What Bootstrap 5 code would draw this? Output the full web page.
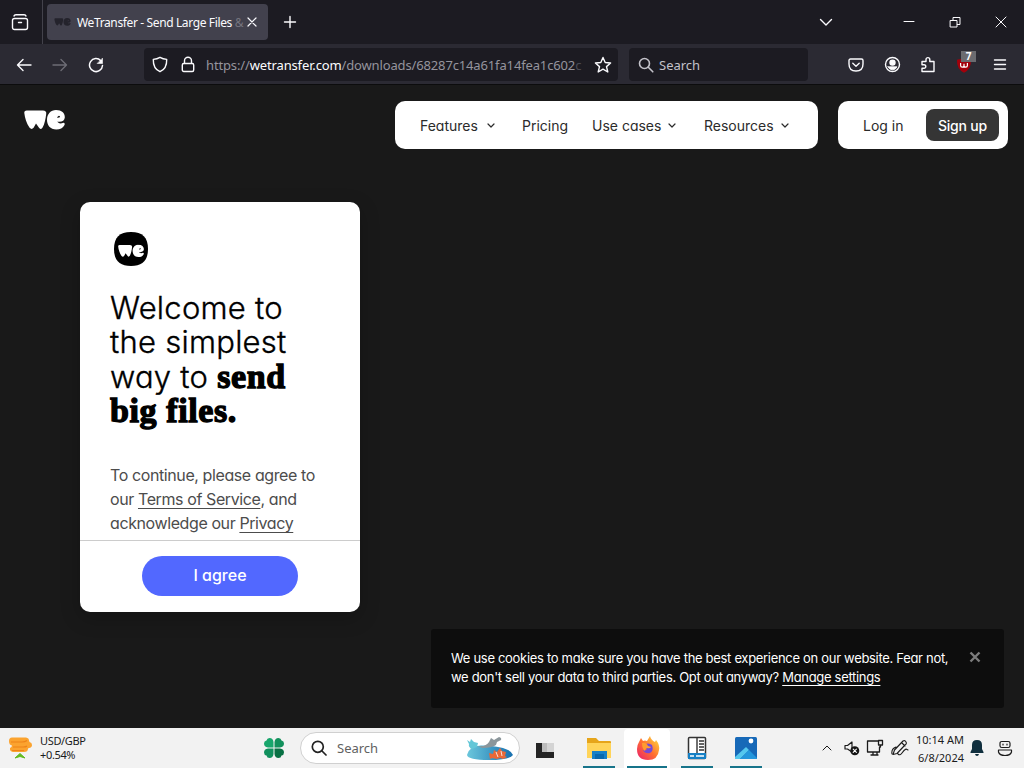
<!DOCTYPE html>
<html lang="en">
<head>
    <meta charset="UTF-8">
    <meta name="viewport" content="width=device-width, initial-scale=1.0">
    <title>WeTransfer - Send Large Files</title>
    <link rel="stylesheet" href="https://cdn.jsdelivr.net/npm/bootstrap@5.3.0/dist/css/bootstrap.min.css">
    <style>
        body { width: 1024px; height: 768px; overflow: hidden; background: #191919; font-family: "Noto Sans", sans-serif; font-size: 12px; line-height: 1.2; }
        svg { display: block; flex: none; }
        .ln { fill: none; stroke: currentColor; stroke-width: 1.4; stroke-linecap: round; stroke-linejoin: round; }
        .line { display: block; white-space: nowrap; }

        /* browser chrome */
        .tabbar { height: 44px; background: #1c1b22; color: #fbfbfe; }
        .viewbtn { width: 43px; height: 44px; border-right: 1px solid #43424b; padding-right: 3px; }
        .tab { width: 221px; height: 36px; margin: 0 0 0 4px; border-radius: 4px; background: #42414d; padding: 0 10px 0 7px; }
        .tab-title { white-space: nowrap; font-size: 12px; letter-spacing: -.37px; margin-left: 6px; padding-top: 2px; }
        .winbtn { width: 46px; }
        .toolbar { height: 41px; background: #2b2a33; color: #fbfbfe; border-bottom: 1px solid #0c0c0d; padding: 1px 6px 0; }
        .tool { width: 36px; }
        .url { width: 474px; height: 33px; margin-left: 30px; background: #1c1b22; border-radius: 4px; padding: 0 6px 0 8px; }
        .url-text { margin-left: 11px; padding-top: 2px; white-space: nowrap; font-size: 13px; letter-spacing: -.14px; color: #95949d; }
        .url-text b { color: #fbfbfe; font-weight: 400; }
        .find { width: 179px; height: 33px; margin-left: 11px; background: #1c1b22; border-radius: 4px; padding-left: 9px; font-size: 13px; color: #c3c2c9; }
        .count { right: 6px; top: -6px; width: 15px; height: 11px; background: #6b6b70; font-size: 10px; line-height: 11px; }

        /* site */
        .site { height: 643px; font-family: Inter, sans-serif; font-feature-settings: "cv11"; }
        .top-row { padding: 16px 16px 0 24px; }
        .pill { height: 48px; background: #fff; border-radius: 10px; color: #2b2b2b; font-size: 14px; }
        .pill > span { padding-top: 2px; }
        .menu { width: 423px; padding-left: 25px; margin-left: auto; }
        .signup { width: 73px; height: 32px; border-radius: 8px; background: #353535; color: #fff; font-weight: 500; letter-spacing: -.2px; }
        .welcome { width: 280px; height: 410px; margin: 53px 0 0 80px; background: #fff; border-radius: 10px; overflow: hidden; box-shadow: 0 6px 20px rgba(0,0,0,.22); }
        .welcome-body { height: 339px; padding: 29px 30px 0; border-bottom: 1px solid #ccc; overflow: hidden; }
        .welcome h1 { margin: 24px 0 0; font-size: 31px; line-height: 34.4px; font-weight: 300; letter-spacing: .25px; -webkit-text-stroke: .35px #000; color: #000; }
        .welcome h1 b { font-family: "Liberation Serif", serif; font-weight: 700; font-size: 34px; line-height: 34px; letter-spacing: .6px; -webkit-text-stroke: 1.3px #000; }
        .terms { margin-top: 34px; font-size: 16px; line-height: 24px; letter-spacing: -.4px; color: #4c4c4c; }
        .terms u, .cookie u { text-underline-offset: 3px; text-decoration-thickness: 1px; text-decoration-skip-ink: none; }
        .agree { width: 156px; height: 40px; border-radius: 20px; background: #5268ff; color: #fff; font-size: 16px; font-weight: 500; }
        .cookie { width: 573px; height: 79px; margin: 17px 20px 0 auto; background: #0d0d0d; color: #fff; font-size: 13px; line-height: 19px; letter-spacing: -.31px; padding: 20px 23px 0 20px; border-radius: 3px; }

        /* taskbar */
        .taskbar { height: 40px; background: #f2f2f2; color: #1b1b1b; font-size: 11px; }
        .rate { width: 70px; margin-left: 8px; line-height: 14px; letter-spacing: -.35px; }
        .task-search { width: 220px; height: 32px; border: 1px solid #d0d0d0; border-radius: 16px; background: #fff; font-size: 13px; color: #616161; padding: 0 5px 0 10px; margin-left: 15px; }
        .task { width: 49px; height: 40px; }
        .task-open { position: relative; }
        .task-open::after { content: ""; position: absolute; left: 9px; right: 8px; bottom: 0; height: 2px; background: #17748a; }
        .task-active::before { content: ""; position: absolute; inset: 1px 2px 0 1px; background: #fff; z-index: -1; border-radius: 4px 4px 0 0; }
        .task-active { z-index: 0; }
        .task-active::after { left: 4px; right: 5px; }
        .clock { width: 52px; text-align: right; line-height: 17.5px; white-space: nowrap; }
    </style>
</head>
<body>
    <!-- shared logo mark -->
    <svg width="0" height="0" class="position-absolute">
        <symbol id="mark-we" viewBox="0 0 41 20">
            <path d="M.3 3Q0 .4 3 .5H18.5Q22.8.3 22.2 4C21.6 9 20.6 14 18.6 17.6Q17.2 20 15.2 18L12 13.4 9.6 17.8Q7.6 20 5.6 17.8C2.4 13.4.9 8 .3 3Z"/>
            <path d="M32 0C38 0 41 3.2 40.8 7.4 40.6 10.6 37.6 12.4 33.4 11.6 34 13.6 36.7 13.8 39.4 12.8Q41.2 12.8 40.5 15C39 18.3 36 19.4 32.3 19.4 26.2 19.4 23 15.4 23 9.8 23 4 26.7 0 32 0ZM33 7.8Q36.4 8 36 6.2 34.5 4.6 33 7.8Z" fill-rule="evenodd"/>
        </symbol>
    </svg>

    <div class="tabbar d-flex align-items-center">
        <div class="viewbtn d-flex align-items-center justify-content-center">
            <svg class="ln" width="18" height="18" viewBox="0 0 18 18"><rect x="1.500" y="5.500" width="15" height="11" rx="2"/><path d="M3 3Q3.300 1.700 5 1.700h8Q14.700 1.700 15 3M7.500 9.500h3"/></svg>
        </div>
        <div class="tab d-flex align-items-center">
            <svg width="17" height="8" fill="#24232c"><use href="#mark-we"/></svg>
            <span class="tab-title">WeTransfer - Send Large Files <span style="color:#75747e">&amp;</span></span>
            <svg class="ln ms-auto" width="12" height="12" viewBox="0 0 12 12"><path d="m2 2 8 8M10 2l-8 8" stroke-width="1.200"/></svg>
        </div>
        <svg class="ln" width="14" height="14" viewBox="0 0 14 14" style="margin-left:15px"><path d="M7 1.500v11M1.500 7h11"/></svg>
        <svg class="ln ms-auto" width="14" height="14" viewBox="0 0 14 14" style="margin-right:53px"><path d="m1.500 4.500 5.500 5.500 5.500-5.500"/></svg>
        <div class="d-flex">
            <div class="winbtn d-flex justify-content-center"><svg class="ln" width="12" height="12" viewBox="0 0 12 12"><path d="M1 5.500h10" stroke-width="1"/></svg></div>
            <div class="winbtn d-flex justify-content-center"><svg class="ln" width="12" height="12" viewBox="0 0 12 12"><path d="M1.500 4.500h6.500V11H1.500zM4 4.200V1.500h7V8.500H8.300" stroke-width="1"/></svg></div>
            <div class="winbtn d-flex justify-content-center"><svg class="ln" width="12" height="12" viewBox="0 0 12 12"><path d="m1 1 10 10M11 1 1 11" stroke-width="1"/></svg></div>
        </div>
    </div>

    <div class="toolbar d-flex align-items-center">
        <div class="tool d-flex justify-content-center"><svg class="ln" width="16" height="16" viewBox="0 0 16 16"><path d="M15 8H1.500M7 2.500 1.500 8 7 13.500"/></svg></div>
        <div class="tool d-flex justify-content-center"><svg class="ln" width="16" height="16" viewBox="0 0 16 16" color="#6d6c75"><path d="M1 8h13.500M9 2.500l5.500 5.500L9 13.500"/></svg></div>
        <div class="tool d-flex justify-content-center"><svg class="ln" width="16" height="16" viewBox="0 0 16 16"><path d="M14.500 8.500A6.500 6.500 0 1 1 12.800 3.700" stroke-width="1.500"/><path d="M14.500 1.500v5h-5z" fill="currentColor" stroke-width=".6"/></svg></div>
        <div class="url d-flex align-items-center">
            <svg class="ln" width="16" height="17" viewBox="0 0 16 17"><path d="M8 1.300Q11 3 14.700 3.400 15 12.500 8 15.700 1 12.500 1.300 3.400 5 3 8 1.300Z"/></svg>
            <svg class="ln" width="14" height="17" viewBox="0 0 14 17" style="margin-left:13px"><rect x="1.300" y="7.500" width="11.400" height="8" rx="1.500"/><path d="M3.500 7.300V4.700a3.500 3.500 0 0 1 7 0v2.600"/></svg>
            <span class="url-text">https://<b>wetransfer.com</b>/downloads/68287c14a61fa14fea1c602<span style="color:#4c4b54">c</span></span>
            <svg class="ln ms-auto" width="18" height="18" viewBox="0 0 18 18"><path d="m9 1.500 2.200 5 5.400.5-4.100 3.600 1.300 5.400L9 13.200 4.200 16l1.300-5.400L1.400 7l5.400-.5z"/></svg>
        </div>
        <div class="find d-flex align-items-center">
            <svg class="ln" width="16" height="16" viewBox="0 0 16 16"><circle cx="6.500" cy="6.500" r="5" stroke-width="1.600"/><path d="m10.300 10.300 4.500 4.500" stroke-width="1.600"/></svg>
            <span style="margin-left:5px;padding-top:2px">Search</span>
        </div>
        <div class="d-flex ms-auto align-items-center">
            <div class="tool d-flex justify-content-center"><svg class="ln" width="16" height="14" viewBox="0 0 16 14"><path d="M2.500 1h11Q15 1 15 2.500V6Q15 13 8 13 1 13 1 6V2.500Q1 1 2.500 1ZM4.800 5.300 8 8.300l3.200-3"/></svg></div>
            <div class="tool d-flex justify-content-center"><svg class="ln" width="17" height="17" viewBox="0 0 17 17"><circle cx="8.500" cy="8.500" r="7"/><circle cx="8.500" cy="6.600" r="2.500" fill="currentColor"/><path d="M4 10.800h9Q11.800 13.800 8.500 13.800T4 10.800Z" fill="currentColor" stroke-width=".8"/></svg></div>
            <div class="tool d-flex justify-content-center"><svg class="ln" width="16" height="17" viewBox="0 0 16 17"><path d="M2 5.500h4V3.500a1.900 1.900 0 0 1 3.800 0v2H14v10H2v-3.200h2a1.800 1.800 0 0 0 0-3.600H2Z"/></svg></div>
            <div class="tool d-flex justify-content-center position-relative">
                <svg width="16" height="16" viewBox="0 0 16 16"><path d="M8 .5Q11 2.500 15 2.700 15.500 12 8 15.700.5 12 1 2.700 5 2.500 8 .5Z" fill="#a3000b"/><path d="M4.600 6v2.500q0 1.700 1.700 1.700T8 8.500V6.800M8 8.500q0 1.700 1.700 1.700t1.700-1.700V6" fill="none" stroke="#fff" stroke-width="1.200"/></svg>
                <span class="count position-absolute text-center fw-bold">7</span>
            </div>
            <div class="tool d-flex justify-content-center"><svg class="ln" width="14" height="14" viewBox="0 0 14 14"><path d="M1.500 2h11M1.500 6.500h11M1.500 11h11"/></svg></div>
        </div>
    </div>

    <main class="site">
        <header class="top-row d-flex">
            <svg width="41" height="20" fill="#fff" style="margin-top:9px"><use href="#mark-we"/></svg>
            <nav class="pill menu d-flex align-items-center">
                <span style="width:67px">Features</span>
                <svg class="ln" width="8" height="6" viewBox="0 0 8 6"><path d="m1 2 3 3 3-3" stroke-width="1.200"/></svg>
                <span style="width:70px;margin-left:27px">Pricing</span>
                <span style="width:76px">Use cases</span>
                <svg class="ln" width="8" height="6" viewBox="0 0 8 6"><path d="m1 2 3 3 3-3" stroke-width="1.200"/></svg>
                <span style="width:77px;margin-left:28px">Resources</span>
                <svg class="ln" width="8" height="6" viewBox="0 0 8 6"><path d="m1 2 3 3 3-3" stroke-width="1.200"/></svg>
            </nav>
            <div class="pill d-flex align-items-center justify-content-between" style="width:170px;margin-left:20px;padding:0 9px 0 25px">
                <span>Log in</span>
                <span class="signup d-flex align-items-center justify-content-center">Sign up</span>
            </div>
        </header>

        <section class="welcome">
            <div class="welcome-body">
                <svg width="36" height="36" viewBox="0 0 36 36" style="margin-left:3px"><path d="M18 1C29.500 1 35 6.500 35 18S29.500 35 18 35 1 29.500 1 18 6.500 1 18 1Z"/><use href="#mark-we" x="5" y="13.500" width="26" height="13" fill="#fff"/></svg>
                <h1>
                    <span class="line">Welcome to</span>
                    <span class="line">the simplest</span>
                    <span class="line">way to <b>send</b></span>
                    <span class="line"><b>big files.</b></span>
                </h1>
                <p class="terms mb-0">
                    <span class="line">To continue, please agree to</span>
                    <span class="line">our <u>Terms of Service</u>, and</span>
                    <span class="line">acknowledge our <u>Privacy</u></span>
                </p>
            </div>
            <div class="d-flex justify-content-center" style="padding-top:15px">
                <div class="agree d-flex align-items-center justify-content-center">I agree</div>
            </div>
        </section>

        <div class="cookie d-flex justify-content-between">
            <div>
                <span class="line">We use cookies to make sure you have the best experience on our website. Fear not,</span>
                <span class="line">we don't sell your data to third parties. Opt out anyway? <u>Manage settings</u></span>
            </div>
            <svg width="12" height="12" viewBox="0 0 12 12" style="margin-top:2px"><path d="m1.500 1.500 9 9M10.500 1.500l-9 9" stroke="#7c7c7c" stroke-width="2.400"/></svg>
        </div>
    </main>

    <footer class="taskbar d-flex align-items-center">
        <svg width="24" height="24" viewBox="0 0 24 24" style="margin-left:8px"><path d="M4 1.500h14q3 .5 3 3l.5 1.500q2.500.5 2.500 3t-3 3l-1 .5q0 3.500-4 3.500H5q-3.500-.5-3-4 2-1 2-2.500Q1 9 1 5q0-3.500 3-3.500Z" fill="#fba32f"/><path d="M3 6h11q3 0 5-1.500M5 11h10q3 0 4-1M4 14.500h12" fill="none" stroke="#ee8419" stroke-width="1.200"/><path d="m7 22 5-4.500 5 4.500-5-1.500Z" fill="#62bb20" stroke="#62bb20"/></svg>
        <div class="rate">
            <span class="line">USD/GBP</span>
            <span class="line">+0.54%</span>
        </div>
        <svg width="22" height="22" viewBox="0 0 22 22" style="margin-left:153px"><path d="M10.500 10.500H5Q1 10 1 6.500 1 4 3.500 3.500 4 1 6.500 1 10 1 10.500 5Z" fill="#18a66c"/><path d="M11.500 10.500H17q4-.5 4-4Q21 4 18.500 3.500 18 1 15.500 1 12 1 11.500 5Z" fill="#12905c"/><path d="M10.500 11.500H5Q1 12 1 15.500 1 18 3.500 18.500 4 21 6.500 21q3.500 0 4-4Z" fill="#10905d"/><path d="M11.500 11.500H17q4 .5 4 4 0 2.500-2.500 3Q18 21 15.500 21q-3.500 0-4-4Z" fill="#087044"/></svg>
        <div class="task-search d-flex align-items-center">
            <svg class="ln" width="16" height="16" viewBox="0 0 16 16" color="#222"><circle cx="6.800" cy="6.800" r="5.500" stroke-width="1.700"/><path d="m11 11 4 4" stroke-width="1.700"/></svg>
            <span style="margin-left:10px;padding-top:1px">Search</span>
            <svg class="ms-auto" width="48" height="26" viewBox="0 0 48 26"><defs><linearGradient id="board"><stop stop-color="#6bc7dc"/><stop offset="1" stop-color="#176fae"/></linearGradient></defs><path d="M1 20Q3 11 15 10.500q18 0 27 4.500 4 2 5 5-4 5-24 5Q2 25 1 20Z" fill="url(#board)"/><path d="M12 11q8 1 11-4l2-4 3 2 5-3q3 1 2 3l-4 2-1 3q-4 3-14 3Z" fill="#8b969b"/><path d="m1 5 3 2 1-3 3 3 4 1-1 4-5 2q-4-2-3-5Z" fill="#63c7d8"/><path d="m23 18 4 1 1-4 3 2 3-4 2 3 4 1-1 4 2 1-4 2-3-1-3 1-5-1-2 1Z" fill="#e96838"/><path d="m30 17 2 5m3-6 1 5" stroke="#fff" stroke-width=".8"/></svg>
        </div>
        <div class="d-flex">
            <div class="task d-flex align-items-center justify-content-center" style="padding-top:4px;margin-right:5px">
                <svg width="20" height="18" viewBox="0 0 20 18"><path d="M1 2h18v15H1Z" fill="#242424"/><path d="M7 2h12v9H7Z" fill="#bcbcbc"/><path d="M12 2h7v9h-7Z" fill="#d4d4d4"/></svg>
            </div>
            <div class="task task-open d-flex align-items-center justify-content-center">
                <svg width="26" height="24" viewBox="0 0 26 24"><path d="M1 2h9l3 3h11q1 0 1 1v16H1Z" fill="#e6a51b"/><path d="M1 7h24v15H1Z" fill="#ffd45a"/><path d="M6 15h15v8H6Z" fill="#1780c7"/><path d="M9 18h9v5H9Z" fill="#0968ad"/></svg>
            </div>
            <div class="task task-open task-active d-flex align-items-center justify-content-center">
                <svg width="24" height="24" viewBox="0 0 24 24"><defs><linearGradient id="fox" x1="1" y1="0" x2="0" y2="1"><stop stop-color="#ffe83f"/><stop offset=".5" stop-color="#ff7130"/><stop offset="1" stop-color="#eb1b70"/></linearGradient></defs><path d="M3 6 5 2l2 3q2-1 4 0l3-5q1 4 5 6l1-2q4 5 3 10-1 10-11 10Q1 24 1 13 1 9 3 6Z" fill="url(#fox)"/><path d="M8 9q4-3 8 0 2 6-2 8-5 1-7-3 3 1 4-1-3-1-3-4Z" fill="#7549d8"/><path d="M6 7q4-1 6 3l3 1q-1 2-4 1-2 1-2 3-3-2-3-8Z" fill="#ff9b31"/></svg>
            </div>
            <div class="task task-open d-flex align-items-center justify-content-center">
                <svg width="20" height="24" viewBox="0 0 20 24"><rect x="1.500" y="1.500" width="17" height="21" rx="1" fill="#fff" stroke="#333" stroke-width="1.500"/><path d="M10 1v17M12 5h5M12 8h5M12 11h5M12 14h5" stroke="#333" stroke-width="1.400"/><path d="M1 17h18v6H1Z" fill="#1680c5"/><path d="M3 20h4m2 0h8" stroke="#fff" stroke-width="1.300"/></svg>
            </div>
            <div class="task task-open d-flex align-items-center justify-content-center">
                <svg width="24" height="24" viewBox="0 0 24 24"><rect x="1" y="1" width="22" height="22" rx="1.500" fill="#1769b8"/><path d="m1 21 11-10 3 3-9 9H1Z" fill="#54c7ee"/><path d="m6 23 9-9 8 8v1Z" fill="#2497dc"/><circle cx="17" cy="5" r="2.400" fill="#fff"/></svg>
            </div>
        </div>
        <div class="d-flex align-items-center ms-auto" style="padding-right:11px">
            <svg class="ln" width="10" height="8" viewBox="0 0 10 8" style="margin-right:12px"><path d="m1 6 4-4 4 4" stroke-width="1"/></svg>
            <svg class="ln" width="16" height="16" viewBox="0 0 16 16"><path d="M1 5.500h2.500L8 2v10L3.500 9H1Z" stroke-width="1.200"/><circle cx="10.800" cy="10.800" r="4.500" fill="#151515" stroke="none"/><path d="m9.200 9.200 3.200 3.200m0-3.200-3.200 3.200" stroke="#fff" stroke-width="1.100"/></svg>
            <svg class="ln" width="18" height="18" viewBox="0 0 18 18" style="margin-left:6px"><path d="M12 2H1.500v11h12V8M5 16h7M7 13v3m4-3v3M12.500 1.500h4V6h-4zM14.500 6v2h-1" stroke-width="1.300"/></svg>
            <svg class="ln" width="18" height="18" viewBox="0 0 18 18" style="margin-left:7px"><path d="M2 15.500 3.500 11 12 2q2-1 3 1t-1 3L6 14.500ZM11 4l3 3M1 15q-1-5 4-7M7 15q2 2 4-1t4-4l2 1" stroke-width="1.100"/></svg>
            <div class="clock" style="margin-left:3px;padding-top:1px"><span class="line">10:14 AM</span><span class="line">6/8/2024</span></div>
            <svg width="14" height="16" viewBox="0 0 14 16" style="margin-left:6px"><path d="M7 0Q12 0 12 5v4l1.500 3v1H.5v-1L2 9V5Q2 0 7 0ZM5 14h4q-.5 2-2 2t-2-2Z" fill="#102f3e"/></svg>
            <svg class="ln" width="16" height="17" viewBox="0 0 16 17" style="margin-left:13px"><rect x="3" y="1.500" width="10" height="6" rx="1.800" stroke-width="1.200"/><path d="M6 4v1m4-1v1M1.500 10h13v2q-1 3.500-6.500 3.500T1.500 12Z" stroke-width="1.200"/></svg>
        </div>
    </footer>
    <script src="https://cdn.jsdelivr.net/npm/bootstrap@5.3.0/dist/js/bootstrap.bundle.min.js"></script>
</body>
</html>
